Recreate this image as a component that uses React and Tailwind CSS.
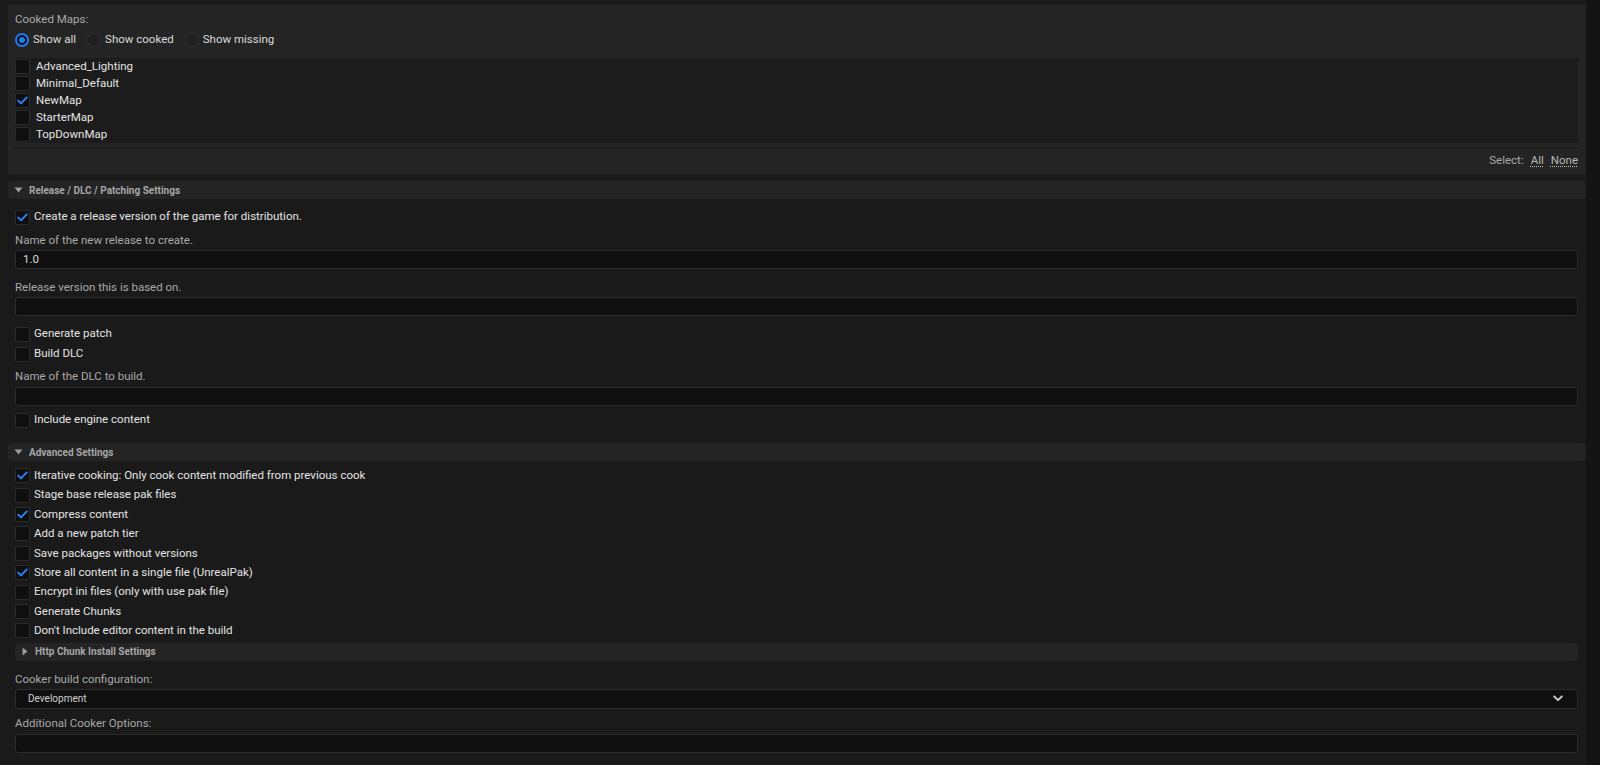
const maps = [
  { name: 'Advanced_Lighting', on: false },
  { name: 'Minimal_Default', on: false },
  { name: 'NewMap', on: true },
  { name: 'StarterMap', on: false },
  { name: 'TopDownMap', on: false },
];

const advanced = [
  ['Iterative cooking: Only cook content modified from previous cook', true],
  ['Stage base release pak files', false],
  ['Compress content', true],
  ['Add a new patch tier', false],
  ['Save packages without versions', false],
  ['Store all content in a single file (UnrealPak)', true],
  ['Encrypt ini files (only with use pak file)', false],
  ['Generate Chunks', false],
  ["Don't Include editor content in the build", false],
];

function Check({ on }) {
  return (
    <span className="w-[15px] h-[15px] shrink-0 rounded-[2px] border border-[#2b2b2b] bg-[#0f0f0f] flex items-center justify-center">
      {on && (
        <svg width="11" height="9" viewBox="0 0 11 9" fill="none">
          <path d="M1.2 4.6 L4 7.4 L9.8 1.4" stroke="#2a84ff" strokeWidth="1.9" strokeLinecap="round" strokeLinejoin="round" />
        </svg>
      )}
    </span>
  );
}

function Radio({ on, label }) {
  return (
    <div className="flex items-center gap-[4px] mr-[11px]">
      <span
        className={
          on
            ? 'w-[14px] h-[14px] rounded-full border-2 border-[#1d7cf2] bg-[#0f0f0f] flex items-center justify-center'
            : 'w-[14px] h-[14px] rounded-full border border-[#303030] bg-[#202020]'
        }
      >
        {on && <span className="w-[6px] h-[6px] rounded-full bg-[#1d7cf2]" />}
      </span>
      <span className="text-[#dadada]">{label}</span>
    </div>
  );
}

function CheckRow({ label, on, className = '' }) {
  return (
    <div className={`flex items-center gap-[4px] ${className}`}>
      <Check on={on} />
      <span className="text-[#e4e4e4] leading-none">{label}</span>
    </div>
  );
}

function Label({ children, className = '' }) {
  return <div className={`h-[16px] leading-[16px] text-[#a8a8a8] ${className}`}>{children}</div>;
}

function Field({ value, className = '' }) {
  return (
    <div className={`h-[19px] rounded-[3px] border border-[#2c2c2c] bg-[#0f0f0f] px-[7px] flex items-center text-[#dadada] ${className}`}>
      {value}
    </div>
  );
}

function Header({ title, className = '' }) {
  return (
    <div className={`h-[18px] rounded-[4px] bg-[#242424] flex items-center pl-[6px] gap-[6px] ${className}`}>
      <svg width="9" height="6" viewBox="0 0 9 6">
        <path d="M0.5 0.5 H8.5 L4.5 5.5 Z" fill="#9c9c9c" />
      </svg>
      <span className="text-[10px] font-bold text-[#a6a6a6]">{title}</span>
    </div>
  );
}

export default function App() {
  return (
    <div
      className="w-[1600px] h-[765px] bg-[#1a1a1a] flex overflow-hidden text-[11.5px]"
      style={{ fontFamily: 'Roboto, "Noto Sans", sans-serif' }}
    >
      <div className="w-[1586px] pl-[8px] pt-[5px] flex flex-col">
        {/* cooked maps panel */}
        <section className="h-[169px] bg-[#242424] pl-[7px] pr-[8px] flex flex-col">
          <div className="h-[16px] leading-[16px] mt-[6px] text-[#a8a8a8]">Cooked Maps:</div>
          <div className="flex items-center h-[16px] mt-[5px]">
            <Radio on label="Show all" />
            <Radio label="Show cooked" />
            <Radio label="Show missing" />
          </div>
          <div className="mt-[10px] bg-[#1c1c1c] flex flex-col">
            {maps.map((m) => (
              <div key={m.name} className="h-[17px] flex items-center gap-[6px]">
                <Check on={m.on} />
                <span className="text-[#e4e4e4]">{m.name}</span>
              </div>
            ))}
          </div>
          <div className="h-[2px] bg-[#1c1c1c] mt-[4px]" />
          <div className="flex justify-end items-center gap-[7px] mt-[3px] text-[#a8a8a8]">
            <span>Select:</span>
            <span className="underline decoration-dotted underline-offset-2 text-[#b8b8b8]">All</span>
            <span className="underline decoration-dotted underline-offset-2 text-[#b8b8b8]">None</span>
          </div>
        </section>

        <Header title="Release / DLC / Patching Settings" className="mt-[7px]" />

        <div className="pl-[7px] pr-[8px] flex flex-col">
          <CheckRow on label="Create a release version of the game for distribution." className="h-[20px] mt-[8px]" />
          <Label className="mt-[5px]">Name of the new release to create.</Label>
          <Field value="1.0" className="mt-[2px]" />
          <Label className="mt-[10px]">Release version this is based on.</Label>
          <Field className="mt-[2px]" />
          <CheckRow label="Generate patch" className="h-[20px] mt-[8px]" />
          <CheckRow label="Build DLC" className="h-[20px]" />
          <Label className="mt-[4px]">Name of the DLC to build.</Label>
          <Field className="mt-[3px]" />
          <CheckRow label="Include engine content" className="h-[20px] mt-[4px]" />
        </div>

        <Header title="Advanced Settings" className="mt-[13px]" />

        <div className="pl-[7px] pr-[8px] flex flex-col">
          <div className="mt-[5px] flex flex-col">
            {advanced.map(([label, on]) => (
              <CheckRow key={label} label={label} on={on} className="h-[19.4px]" />
            ))}
          </div>

          <div className="h-[18px] mt-[2px] rounded-[4px] bg-[#242424] flex items-center pl-[7px] gap-[7px]">
            <svg width="6" height="9" viewBox="0 0 6 9">
              <path d="M0.5 0.5 V8.5 L5.5 4.5 Z" fill="#9c9c9c" />
            </svg>
            <span className="text-[10px] font-bold text-[#a6a6a6]">Http Chunk Install Settings</span>
          </div>

          <Label className="mt-[10px]">Cooker build configuration:</Label>
          <div className="h-[20px] mt-[2px] rounded-[3px] border border-[#2c2c2c] bg-[#0f0f0f] pl-[12px] pr-[14px] flex items-center justify-between">
            <span className="text-[10px] text-[#cfcfcf]">Development</span>
            <svg width="10" height="7" viewBox="0 0 10 7" fill="none">
              <path d="M1.2 1.5 L5 5.2 L8.8 1.5" stroke="#cfcfcf" strokeWidth="1.8" strokeLinecap="round" strokeLinejoin="round" />
            </svg>
          </div>
          <Label className="mt-[6px]">Additional Cooker Options:</Label>
          <Field className="mt-[3px]" />
        </div>
      </div>
      <div className="w-[14px] bg-[#141414]" />
    </div>
  );
}
